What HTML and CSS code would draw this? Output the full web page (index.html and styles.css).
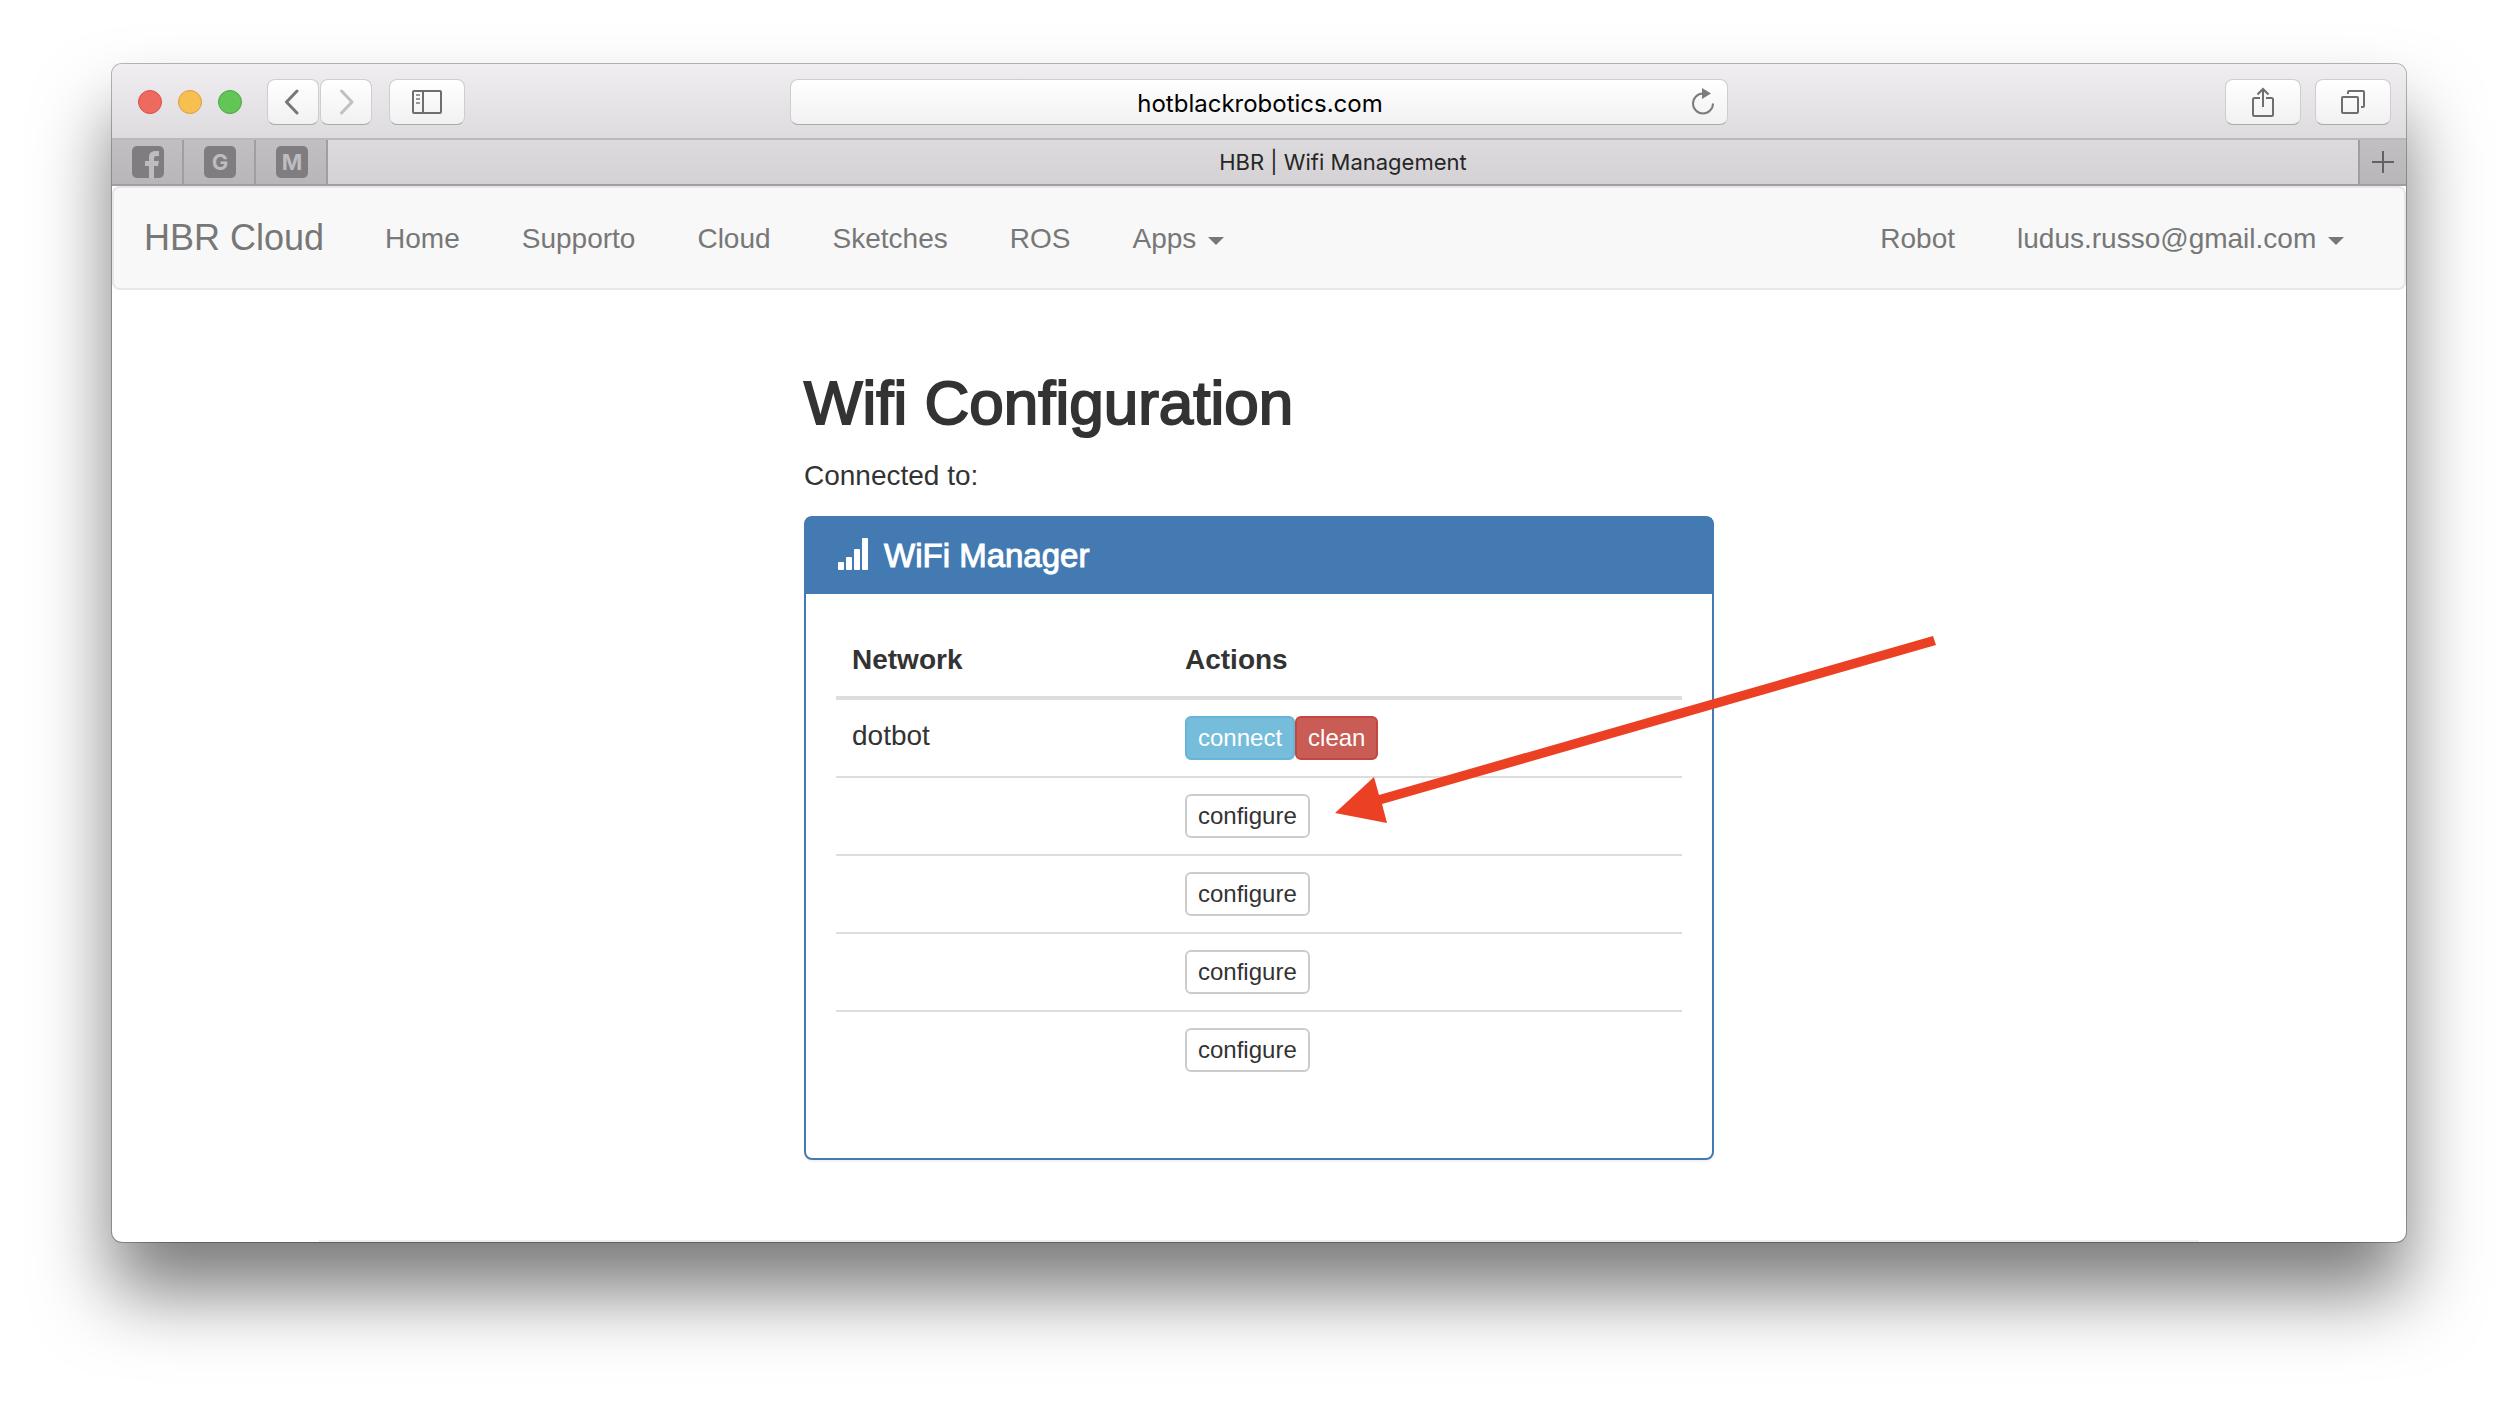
FILE: index.html
```html
<!DOCTYPE html>
<html lang="en">
<head>
<meta charset="utf-8">
<title>HBR | Wifi Management</title>
<link rel="stylesheet" href="styles.css">
</head>
<body>
<div class="window">
  <header class="toolbar">
    <div class="toolbar-side">
      <div class="lights">
        <span class="light light-close"></span>
        <span class="light light-min"></span>
        <span class="light light-max"></span>
      </div>
      <div class="history">
        <button class="tool tool-nav" type="button" aria-label="Back">
          <svg width="16" height="26" viewBox="0 0 16 26" fill="none" stroke="#777" stroke-width="3" stroke-linecap="round" stroke-linejoin="round"><path d="M12 2 1.500 13 12 24"/></svg>
        </button>
        <button class="tool tool-nav" type="button" aria-label="Forward">
          <svg width="16" height="26" viewBox="0 0 16 26" fill="none" stroke="#c0c0c0" stroke-width="3" stroke-linecap="round" stroke-linejoin="round"><path d="M3.500 2 14 13 3.500 24"/></svg>
        </button>
      </div>
      <button class="tool" type="button" aria-label="Show sidebar">
        <svg width="30" height="24" viewBox="0 0 30 24" fill="none" stroke="#6e6e6e" stroke-width="2"><rect x="1" y="1" width="28" height="22" rx="1"/><path d="M11 1v22"/><path stroke="#999" d="M4 5h4M4 9h4M4 13h4"/></svg>
      </button>
    </div>
    <div class="address">
      <input class="address-input" type="text" value="hotblackrobotics.com" aria-label="Address">
      <button class="reload" type="button" aria-label="Reload">
        <svg width="24" height="28" viewBox="0 0 24 28" fill="none"><path d="M12 5.500A10 10 0 1 0 22 15.500" stroke="#7c7c7c" stroke-width="2"/><path d="M11 0l9 5.500-9 5.500z" fill="#7c7c7c"/></svg>
      </button>
    </div>
    <div class="toolbar-side toolbar-end">
      <button class="tool" type="button" aria-label="Share">
        <svg width="22" height="30" viewBox="0 0 22 30" fill="none" stroke="#6e6e6e" stroke-width="2"><path d="M8 11H2.500Q1 11 1 12.500v15Q1 29 2.500 29h17q1.500 0 1.500-1.500v-15Q21 11 19.500 11H14"/><path d="M11 20V2M5.500 7.500 11 2l5.500 5.500"/></svg>
      </button>
      <button class="tool" type="button" aria-label="Show all tabs">
        <svg width="24" height="24" viewBox="0 0 24 24" fill="none" stroke="#6e6e6e" stroke-width="2"><rect x="1" y="7" width="16" height="16" rx="1"/><path d="M7 4V2q0-1 1-1h14q1 0 1 1v14q0 1-1 1h-2"/></svg>
      </button>
    </div>
  </header>

  <div class="tabs">
    <button class="pin" type="button" aria-label="Facebook">
      <svg width="32" height="32" viewBox="0 0 32 32"><rect width="32" height="32" rx="5" fill="#7f7d80"/><path fill="#bebcbf" d="M17 32V20h-4v-5h4v-3.500C17 7 19.500 5 23.500 5H27v5h-2.500C22.500 10 22 11 22 12.500V15h5l-1 5h-4v12z"/></svg>
    </button>
    <button class="pin" type="button"><span class="pin-letter">G</span></button>
    <button class="pin" type="button"><span class="pin-letter">M</span></button>
    <div class="tab">HBR | Wifi Management</div>
    <button class="new-tab" type="button" aria-label="New tab">
      <svg width="22" height="22" viewBox="0 0 22 22" stroke="#626262" stroke-width="2"><path d="M11 0v22M0 11h22"/></svg>
    </button>
  </div>

  <nav class="navbar">
    <a class="brand" href="#">HBR Cloud</a>
    <a class="nav-link" href="#">Home</a>
    <a class="nav-link" href="#">Supporto</a>
    <a class="nav-link" href="#">Cloud</a>
    <a class="nav-link" href="#">Sketches</a>
    <a class="nav-link" href="#">ROS</a>
    <a class="nav-link" href="#">Apps <span class="caret"></span></a>
    <a class="nav-link nav-right" href="#">Robot</a>
    <a class="nav-link" href="#">ludus.russo@gmail.com <span class="caret"></span></a>
  </nav>

  <main class="content">
    <h2 class="title">Wifi Configuration</h2>
    <p class="status">Connected to:</p>
    <section class="panel">
      <div class="panel-heading">
        <svg width="32" height="32" viewBox="0 0 32 32" fill="#fff"><rect x="2" y="24" width="6" height="8" rx="1"/><rect x="10" y="19" width="6" height="13" rx="1"/><rect x="18" y="11" width="6" height="21" rx="1"/><rect x="26" width="6" height="32" rx="1"/></svg>
        <h3 class="panel-title">WiFi Manager</h3>
      </div>
      <div class="panel-body">
        <table class="networks">
          <thead>
            <tr><th class="col-network">Network</th><th>Actions</th></tr>
          </thead>
          <tbody>
            <tr><td>dotbot</td><td><div class="actions"><button class="btn btn-info" type="button">connect</button><button class="btn btn-danger" type="button">clean</button></div></td></tr>
            <tr><td></td><td><div class="actions"><button class="btn" type="button">configure</button></div></td></tr>
            <tr><td></td><td><div class="actions"><button class="btn" type="button">configure</button></div></td></tr>
            <tr><td></td><td><div class="actions"><button class="btn" type="button">configure</button></div></td></tr>
            <tr><td></td><td><div class="actions"><button class="btn" type="button">configure</button></div></td></tr>
          </tbody>
        </table>
      </div>
      <svg class="arrow" width="602" height="188" viewBox="0 0 602 188" fill="#eb4024"><path d="M0 177 39 141l5 18L598 0l3 9L47 168l5 19z"/></svg>
    </section>
  </main>
  <hr class="rule">
</div>
</body>
</html>
```
FILE: styles.css
```css
* {
  box-sizing: border-box;
}

body {
  margin: 0;
  padding: 64px 112px 160px;
  background: #fff;
  color: #333;
  font: 28px/40px "Liberation Sans", Arial, sans-serif;
}

button {
  margin: 0;
  padding: 0;
  border: 0;
  background: none;
  font-family: inherit;
}

svg {
  display: block;
  flex: none;
}

.window {
  overflow: hidden;
  border-radius: 10px;
  background: #fff;
  box-shadow: 0 0 0 1px rgba(0, 0, 0, 0.28), 0 50px 76px rgba(0, 0, 0, 0.52);
}

/* Browser toolbar */
.toolbar {
  display: grid;
  grid-template-columns: 1fr 938px 1fr;
  align-items: center;
  height: 76px;
  padding: 2px 15px 0;
  border-bottom: 2px solid #bab8bb;
  background: linear-gradient(#f0eef0, #dddbde);
}

.toolbar-side {
  display: flex;
  align-items: center;
}

.toolbar-end {
  justify-content: flex-end;
  gap: 14px;
}

.lights {
  display: flex;
  gap: 16px;
  margin: 0 25px 0 11px;
}

.light {
  width: 24px;
  height: 24px;
  border: 1px solid;
  border-radius: 50%;
}

.light-close {
  border-color: #d3504a;
  background: #ee6a5f;
}

.light-min {
  border-color: #d9a13c;
  background: #f6bf50;
}

.light-max {
  border-color: #4ba73f;
  background: #62c656;
}

.history {
  display: flex;
  gap: 1px;
  margin-right: 17px;
}

.tool,
.address {
  height: 46px;
  border: 1px solid #cfcdd0;
  border-bottom-color: #aaa8ab;
  border-radius: 8px;
  background: linear-gradient(#fff, #f1f1f1);
}

.tool {
  display: flex;
  align-items: center;
  justify-content: center;
  width: 76px;
}

.tool-nav {
  width: 52px;
}

.address {
  display: flex;
  align-items: center;
  padding: 0 12px;
}

.address-input {
  flex: 1;
  min-width: 0;
  height: 42px;
  padding: 2px 0 0 26px;
  border: 0;
  background: none;
  color: #000;
  font: 24px/40px Inter, Roboto, sans-serif;
  text-align: center;
}

/* Tab strip */
.tabs {
  display: flex;
  height: 46px;
  border-bottom: 2px solid #a09ea1;
  background: linear-gradient(#dcdadd, #d4d2d5);
}

.pin,
.new-tab {
  display: flex;
  align-items: center;
  justify-content: center;
  background: linear-gradient(#c1bfc2, #b8b6b9);
}

.pin {
  width: 72px;
  padding-left: 2px;
  border-right: 2px solid #a09ea1;
}

.pin-letter {
  width: 32px;
  border-radius: 5px;
  background: #7f7d80;
  color: #bebcbf;
  font: bold 22px/32px Inter, Roboto, sans-serif;
}

.tab {
  flex: 1;
  color: #262626;
  font: 22px/44px Inter, Roboto, sans-serif;
  text-align: center;
}

.new-tab {
  width: 48px;
  border-left: 2px solid #a09ea1;
}

/* Site navigation */
.navbar {
  display: flex;
  padding: 0 29px 0 0;
  border: 2px solid #e7e7e7;
  border-radius: 8px;
  background: #f8f8f8;
}

.brand,
.nav-link {
  color: #777;
  text-decoration: none;
  white-space: nowrap;
}

.brand {
  padding: 30px;
  font-size: 36px;
}

.nav-link {
  padding: 31px 31px 29px;
}

.nav-right {
  margin-left: auto;
}

.caret {
  display: inline-block;
  margin-left: 4px;
  border-top: 8px solid;
  border-right: 8px solid transparent;
  border-left: 8px solid transparent;
  vertical-align: middle;
}

/* Page content */
.content {
  max-width: 910px;
  margin: 0 auto;
  padding: 80px 0 40px;
}

.title {
  margin: 0 0 20px;
  font-size: 62px;
  font-weight: 500;
  line-height: 66px;
  -webkit-text-stroke: 2px;
}

.status {
  margin: 0 0 20px;
}

.panel {
  position: relative;
  border: 2px solid #447ab2;
  border-radius: 8px;
  box-shadow: 0 2px 2px rgba(0, 0, 0, 0.05);
}

.panel-heading {
  display: flex;
  gap: 16px;
  padding: 20px 30px;
  background: #447ab2;
  color: #fff;
}

.panel-title {
  margin: 0;
  font-size: 33px;
  font-weight: 500;
  line-height: 36px;
  -webkit-text-stroke: 1px;
}

.panel-body {
  padding: 30px 30px 70px;
}

.networks {
  width: 100%;
  border-spacing: 0;
}

.networks th {
  padding: 16px;
  border-bottom: 4px solid #ddd;
  text-align: left;
}

.networks td {
  height: 78px;
  padding: 16px;
  border-top: 2px solid #ddd;
  vertical-align: top;
}

.networks tbody tr:first-child td {
  height: 76px;
  border-top: 0;
}

.col-network {
  width: 333px;
}

.actions {
  display: flex;
}

.btn {
  height: 44px;
  padding: 0 11px;
  border: 2px solid #ccc;
  border-radius: 6px;
  background: #fff;
  color: #333;
  font-size: 24px;
  line-height: 36px;
}

.btn-info {
  border-color: #64b5d7;
  background: #75bddb;
  color: #fff;
}

.btn-danger {
  border-color: #c3463f;
  background: #c95c54;
  color: #fff;
}

.arrow {
  position: absolute;
  top: 118px;
  left: 529px;
}

.rule {
  max-width: 1880px;
  margin: 40px auto 0;
  border: 0;
  border-top: 2px solid #eee;
}
```
